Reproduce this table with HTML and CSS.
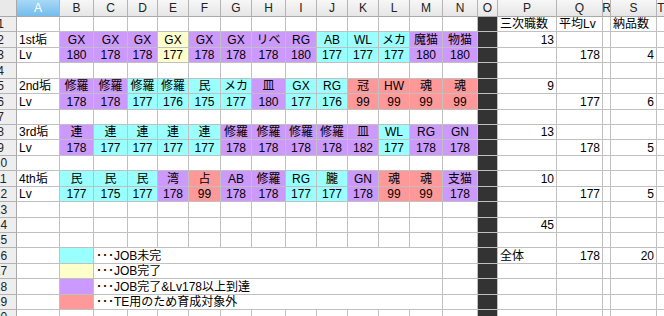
FILE: index.html
```html
<!DOCTYPE html>
<html lang="ja">
<head>
<meta charset="utf-8">
<title>Sheet</title>
<link rel="stylesheet" href="styles.css">
</head>
<body>
<div class="g">
  <!-- header row -->
  <div class="corner"></div>
  <div class="ch sel">A</div><div class="ch">B</div><div class="ch">C</div><div class="ch">D</div><div class="ch">E</div><div class="ch">F</div><div class="ch">G</div><div class="ch">H</div><div class="ch">I</div><div class="ch">J</div><div class="ch">K</div><div class="ch">L</div><div class="ch">M</div><div class="ch">N</div><div class="ch">O</div><div class="ch">P</div><div class="ch">Q</div><div class="ch">R</div><div class="ch">S</div><div class="ch">T</div><div class="ch">U</div>

  <!-- 1 -->
  <div class="rh"><span>1</span></div>
  <div></div><div></div><div></div><div></div><div></div><div></div><div></div><div></div><div></div><div></div><div></div><div></div><div></div><div></div>
  <div class="o"></div><div>三次職数</div><div>平均Lv</div><div></div><div>納品数</div><div></div><div></div>

  <!-- 2 -->
  <div class="rh"><span>2</span></div>
  <div>1st垢</div>
  <div class="p">GX</div><div class="p">GX</div><div class="p">GX</div><div class="y">GX</div><div class="p">GX</div><div class="p">GX</div><div class="p">リベ</div><div class="p">RG</div><div class="c">AB</div><div class="c">WL</div><div class="c">メカ</div><div class="p">魔猫</div><div class="p">物猫</div>
  <div class="o"></div><div class="n">13</div><div></div><div></div><div></div><div></div><div></div>

  <!-- 3 -->
  <div class="rh"><span>3</span></div>
  <div>Lv</div>
  <div class="p">180</div><div class="p">178</div><div class="p">178</div><div class="y">177</div><div class="p">178</div><div class="p">178</div><div class="p">178</div><div class="p">180</div><div class="c">177</div><div class="c">177</div><div class="c">177</div><div class="p">180</div><div class="p">180</div>
  <div class="o"></div><div></div><div class="n">178</div><div></div><div class="n">4</div><div></div><div></div>

  <!-- 4 -->
  <div class="rh"><span>4</span></div>
  <div></div><div></div><div></div><div></div><div></div><div></div><div></div><div></div><div></div><div></div><div></div><div></div><div></div><div></div>
  <div class="o"></div><div></div><div></div><div></div><div></div><div></div><div></div>

  <!-- 5 -->
  <div class="rh"><span>5</span></div>
  <div>2nd垢</div>
  <div class="p">修羅</div><div class="p">修羅</div><div class="c">修羅</div><div class="c">修羅</div><div class="c">民</div><div class="c">メカ</div><div class="p">皿</div><div class="c">GX</div><div class="c">RG</div><div class="r">冠</div><div class="r">HW</div><div class="r">魂</div><div class="r">魂</div>
  <div class="o"></div><div class="n">9</div><div></div><div></div><div></div><div></div><div></div>

  <!-- 6 -->
  <div class="rh"><span>6</span></div>
  <div>Lv</div>
  <div class="p">178</div><div class="p">178</div><div class="c">177</div><div class="c">176</div><div class="c">175</div><div class="c">177</div><div class="p">180</div><div class="c">177</div><div class="c">176</div><div class="r">99</div><div class="r">99</div><div class="r">99</div><div class="r">99</div>
  <div class="o"></div><div></div><div class="n">177</div><div></div><div class="n">6</div><div></div><div></div>

  <!-- 7 -->
  <div class="rh"><span>7</span></div>
  <div></div><div></div><div></div><div></div><div></div><div></div><div></div><div></div><div></div><div></div><div></div><div></div><div></div><div></div>
  <div class="o"></div><div></div><div></div><div></div><div></div><div></div><div></div>

  <!-- 8 -->
  <div class="rh"><span>8</span></div>
  <div>3rd垢</div>
  <div class="p">連</div><div class="c">連</div><div class="c">連</div><div class="c">連</div><div class="c">連</div><div class="p">修羅</div><div class="p">修羅</div><div class="p">修羅</div><div class="p">修羅</div><div class="p">皿</div><div class="c">WL</div><div class="p">RG</div><div class="p">GN</div>
  <div class="o"></div><div class="n">13</div><div></div><div></div><div></div><div></div><div></div>

  <!-- 9 -->
  <div class="rh"><span>9</span></div>
  <div>Lv</div>
  <div class="p">178</div><div class="c">177</div><div class="c">177</div><div class="c">177</div><div class="c">177</div><div class="p">178</div><div class="p">178</div><div class="p">178</div><div class="p">178</div><div class="p">182</div><div class="c">177</div><div class="p">178</div><div class="p">178</div>
  <div class="o"></div><div></div><div class="n">178</div><div></div><div class="n">5</div><div></div><div></div>

  <!-- 10 -->
  <div class="rh"><span>10</span></div>
  <div></div><div></div><div></div><div></div><div></div><div></div><div></div><div></div><div></div><div></div><div></div><div></div><div></div><div></div>
  <div class="o"></div><div></div><div></div><div></div><div></div><div></div><div></div>

  <!-- 11 -->
  <div class="rh"><span>11</span></div>
  <div>4th垢</div>
  <div class="c">民</div><div class="c">民</div><div class="c">民</div><div class="p">湾</div><div class="r">占</div><div class="p">AB</div><div class="p">修羅</div><div class="c">RG</div><div class="c">朧</div><div class="p">GN</div><div class="r">魂</div><div class="r">魂</div><div class="p">支猫</div>
  <div class="o"></div><div class="n">10</div><div></div><div></div><div></div><div></div><div></div>

  <!-- 12 -->
  <div class="rh"><span>12</span></div>
  <div>Lv</div>
  <div class="c">177</div><div class="c">175</div><div class="c">177</div><div class="p">178</div><div class="r">99</div><div class="p">178</div><div class="p">178</div><div class="c">177</div><div class="c">177</div><div class="p">178</div><div class="r">99</div><div class="r">99</div><div class="p">178</div>
  <div class="o"></div><div></div><div class="n">177</div><div></div><div class="n">5</div><div></div><div></div>

  <!-- 13 -->
  <div class="rh"><span>13</span></div>
  <div></div><div></div><div></div><div></div><div></div><div></div><div></div><div></div><div></div><div></div><div></div><div></div><div></div><div></div>
  <div class="o"></div><div></div><div></div><div></div><div></div><div></div><div></div>

  <!-- 14 -->
  <div class="rh"><span>14</span></div>
  <div></div><div></div><div></div><div></div><div></div><div></div><div></div><div></div><div></div><div></div><div></div><div></div><div></div><div></div>
  <div class="o"></div><div class="n">45</div><div></div><div></div><div></div><div></div><div></div>

  <!-- 15 -->
  <div class="rh"><span>15</span></div>
  <div></div><div></div><div></div><div></div><div></div><div></div><div></div><div></div><div></div><div></div><div></div><div></div><div></div><div></div>
  <div class="o"></div><div></div><div></div><div></div><div></div><div></div><div></div>

  <!-- 16 -->
  <div class="rh"><span>16</span></div>
  <div></div><div class="c"></div><div class="lg">･･･JOB未完</div><div></div>
  <div class="o"></div><div>全体</div><div class="n">178</div><div></div><div class="n">20</div><div></div><div></div>

  <!-- 17 -->
  <div class="rh"><span>17</span></div>
  <div></div><div class="y"></div><div class="lg">･･･JOB完了</div><div></div>
  <div class="o"></div><div></div><div></div><div></div><div></div><div></div><div></div>

  <!-- 18 -->
  <div class="rh"><span>18</span></div>
  <div></div><div class="p"></div><div class="lg">･･･JOB完了&amp;Lv178以上到達</div><div></div>
  <div class="o"></div><div></div><div></div><div></div><div></div><div></div><div></div>

  <!-- 19 -->
  <div class="rh"><span>19</span></div>
  <div></div><div class="r"></div><div class="lg">･･･TE用のため育成対象外</div><div></div>
  <div class="o"></div><div></div><div></div><div></div><div></div><div></div><div></div>

  <!-- 20 -->
  <div class="rh"><span>20</span></div>
  <div></div><div></div><div></div><div></div><div></div><div></div><div></div><div></div><div></div><div></div><div></div><div></div><div></div><div></div>
  <div class="o"></div><div></div><div></div><div></div><div></div><div></div><div></div>
</div>
</body>
</html>
```

FILE: styles.css
```css
html, body {
  margin: 0;
  padding: 0;
  background: #ffffff;
  overflow: hidden;
}

body {
  font-family: "Liberation Sans", "Noto Sans CJK JP", sans-serif;
  font-size: 12px;
  color: #000000;
}

.g {
  display: grid;
  width: 716px;
  grid-template-columns: 17px 43px 34px 34px 30px 31px 32px 31px 34px 31px 31px 31px 31px 33px 35px 20px 59px 46px 8px 46px 9px 50px;
  grid-template-rows: 17px 15px 16px 15px 16px 15px 16px 15px 15px 16px 15px 16px 15px 16px 15px 15px 16px 15px 16px 15px 15px;
}

.g > div {
  box-sizing: border-box;
  display: flex;
  align-items: center;
  justify-content: flex-start;
  padding: 0 2px;
  border-right: 1px solid #c0c0c0;
  border-bottom: 1px solid #c0c0c0;
  overflow: hidden;
  white-space: nowrap;
  line-height: 14px;
}

.g > .corner {
  background: #e9e9e9;
  border-right: 1px solid #a9a9a9;
  border-bottom: 1px solid #a9a9a9;
}

.g > .ch {
  justify-content: center;
  padding: 0;
  background: linear-gradient(#f7f7f7, #e6e6e6);
  border-right: 1px solid #b4b4b4;
  border-bottom: 1px solid #a9a9a9;
  color: #222222;
}

.g > .ch.sel {
  background: linear-gradient(#a8d8f6, #74bdec);
  color: #ffffff;
}

.g > .rh {
  padding: 0;
  background: #eeeeee;
  border-right: 1px solid #a9a9a9;
  border-bottom: 1px solid #b4b4b4;
  color: #222222;
}

.rh span {
  flex: none;
  width: 32px;
  margin-left: -15.5px;
  text-align: center;
}

.g > .n {
  justify-content: flex-end;
}

.g > .c,
.g > .y,
.g > .p,
.g > .r {
  justify-content: center;
  padding: 0;
}

.g > .c { background: #99ffff; }
.g > .y { background: #ffffcc; }
.g > .p { background: #cc99ff; }
.g > .r { background: #ff9999; }

.g > .o {
  background: #333333;
}

.g > .lg {
  grid-column: span 11;
}
```
